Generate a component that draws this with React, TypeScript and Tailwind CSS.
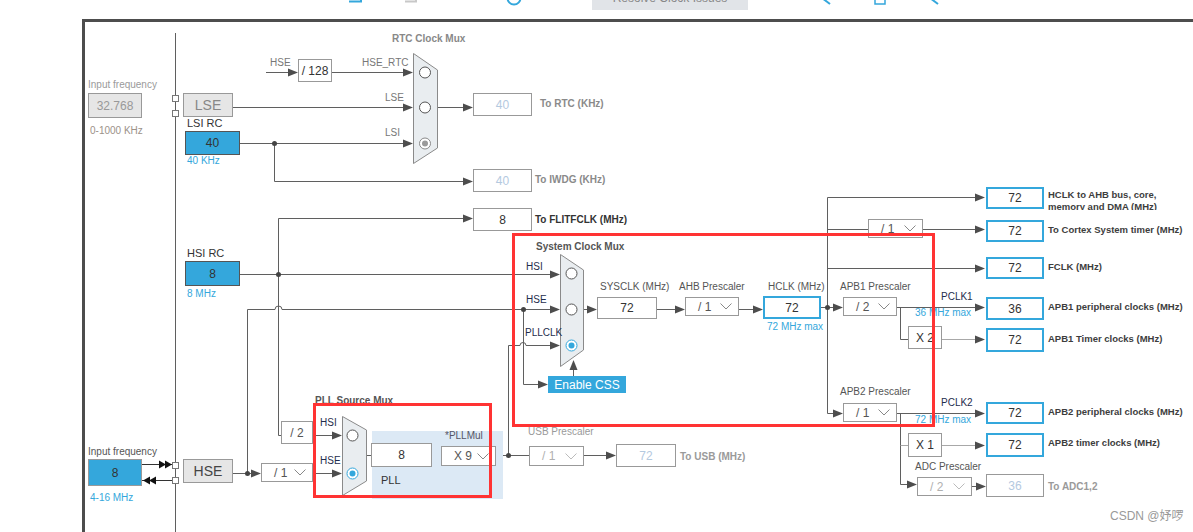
import React from "react";

type Dir = "r" | "l" | "u";
function Arrow({ x, y, d = "r", c = "#4d4d4d" }: { x: number; y: number; d?: Dir; c?: string }) {
  let pts = "";
  if (d === "r") pts = `${x - 10},${y - 4} ${x},${y} ${x - 10},${y + 4}`;
  if (d === "l") pts = `${x + 10},${y - 4} ${x},${y} ${x + 10},${y + 4}`;
  if (d === "u") pts = `${x - 4},${y + 10} ${x},${y} ${x + 4},${y + 10}`;
  return <polygon points={pts} fill={c} />;
}

function Radio({ x, y, on, blue }: { x: number; y: number; on?: boolean; blue?: boolean }) {
  const c = blue ? "#34a7dc" : on ? "#8a8a8a" : "#555";
  return (
    <g>
      <circle cx={x} cy={y} r={5.5} fill="#fff" stroke={c} strokeWidth={1} />
      {(on || blue) && <circle cx={x} cy={y} r={3} fill={blue ? "#34a7dc" : "#9a9a9a"} />}
    </g>
  );
}

function Chevron({ c = "#888" }: { c?: string }) {
  return (
    <svg width="12" height="7" viewBox="0 0 12 7">
      <polyline points="0.5,0.5 6,6 11.5,0.5" fill="none" stroke={c} strokeWidth="1" />
    </svg>
  );
}

function L({ c, children }: { c: string; children: React.ReactNode }) {
  return <div className={"absolute whitespace-nowrap leading-none " + c}>{children}</div>;
}

function B({ c, children }: { c: string; children?: React.ReactNode }) {
  return <div className={"absolute flex items-center justify-center leading-none " + c}>{children}</div>;
}

function DD({ c, t, dis }: { c: string; t: string; dis?: boolean }) {
  return (
    <div
      className={
        "absolute flex items-center justify-between border border-[#999] bg-white pl-[12px] pr-[6px] text-[12px] leading-none " +
        c
      }
    >
      <span className={dis ? "text-[#b0b0b0]" : "text-[#555]"}>{t}</span>
      <Chevron c={dis ? "#bbb" : "#888"} />
    </div>
  );
}

export default function App() {
  return (
    <div className="relative w-[1193px] h-[532px] overflow-hidden bg-white font-['Liberation_Sans',Arial,sans-serif]">
      {/* toolbar remnants */}
      <div className="relative h-[19px]">
        <svg className="absolute left-0 top-0" width="1193" height="19">
          <path d="M349 1.5 H361 V-3" stroke="#34a7dc" strokeWidth="2" fill="none" />
          <path d="M405 1.5 H416 V-3" stroke="#c8c8c8" strokeWidth="2" fill="none" />
          <circle cx="514" cy="-2" r="6.5" stroke="#34a7dc" strokeWidth="2" fill="none" />
          <path d="M822 -2 L830 4" stroke="#34a7dc" strokeWidth="2" fill="none" />
          <path d="M875 -3 V4 H885 V-3" stroke="#34a7dc" strokeWidth="1.5" fill="none" />
          <path d="M930 -2 L938 4" stroke="#34a7dc" strokeWidth="2" fill="none" />
        </svg>
        <div className="absolute left-[592px] top-[-14px] w-[156px] h-[24px] bg-[#e1e4e8] flex items-center justify-center text-[12px] text-[#888]">
          Resolve Clock Issues
        </div>
      </div>
      <div className="ml-[82px] h-[513px] border-l-[3px] border-t-[3px] border-[#4d4d4d]" />

      {/* wires */}
      <svg className="absolute left-0 top-0" width="1193" height="532">
        <g stroke="#5f5f5f" strokeWidth="1" fill="none">
          <path d="M175.5 33 V532" />
          <path d="M266 72.5 H296" />
          <path d="M332 72.5 H411" />
          <path d="M233 107.5 H411" />
          <path d="M240 143.5 H411" />
          <path d="M274.5 143.5 V181.5 H471" />
          <path d="M437 107.5 H471" />
          <path d="M278.5 218.5 H471" />
          <path d="M278.5 218.5 V435.5 H282" />
          <path d="M240 274.5 H558" />
          <path d="M233 473.5 H259" />
          <path d="M247.5 473.5 V309.5 H275 a3.5 3.5 0 0 1 7 0 H558" />
          <path d="M523.5 309.5 V384.5 H546" />
          <path d="M313 435.5 H340" />
          <path d="M313 473.5 H340" />
          <path d="M366 455.5 H372" />
          <path d="M432 455.5 H441" />
          <path d="M496 455.5 H529" />
          <path d="M508.5 455.5 V345.5 H520 a3 3 0 0 1 6 0 H558" />
          <path d="M584 455.5 H614" />
          <path d="M573.5 376 V362" />
          <path d="M583 309.5 H595" />
          <path d="M657 309.5 H683" />
          <path d="M739 309.5 H761" />
          <path d="M821 307.5 H841" />
          <path d="M827.5 197.5 V413.5 H841" />
          <path d="M827.5 197.5 H983" />
          <path d="M827.5 229.5 H868" />
          <path d="M923 229.5 H983" />
          <path d="M827.5 268.5 H983" />
          <path d="M897 307.5 H983" />
          <path d="M900.5 307.5 V339.5 H908" />
          <path d="M897 413.5 H983" />
          <path d="M900.5 413.5 V484.5 H915" />
          <path d="M972 486.5 H984" />
          <path d="M142 464.5 H172" stroke="#333" />
          <path d="M142 480.5 H172" stroke="#333" />
        </g>
        <g stroke="#a8a8a8" strokeWidth="1" fill="none">
          <path d="M942 339.5 H983" />
          <path d="M900.5 445.5 H908" />
          <path d="M942 445.5 H983" />
        </g>
        <Arrow x={298} y={72.5} />
        <Arrow x={413} y={72.5} />
        <Arrow x={413} y={107.5} />
        <Arrow x={413} y={143.5} />
        <Arrow x={473} y={181.5} />
        <Arrow x={473} y={107.5} />
        <Arrow x={473} y={218.5} />
        <Arrow x={560} y={274.5} />
        <Arrow x={261} y={473.5} />
        <Arrow x={560} y={309.5} />
        <Arrow x={548} y={384.5} />
        <Arrow x={342} y={435.5} />
        <Arrow x={342} y={473.5} />
        <Arrow x={560} y={345.5} />
        <Arrow x={616} y={455.5} />
        <Arrow x={573.5} y={360} d="u" />
        <Arrow x={597} y={309.5} />
        <Arrow x={685} y={309.5} />
        <Arrow x={763} y={309.5} />
        <Arrow x={843} y={307.5} />
        <Arrow x={843} y={413.5} />
        <Arrow x={985} y={197.5} />
        <Arrow x={985} y={229.5} />
        <Arrow x={985} y={268.5} />
        <Arrow x={985} y={307.5} />
        <Arrow x={985} y={339.5} />
        <Arrow x={985} y={413.5} />
        <Arrow x={985} y={445.5} />
        <Arrow x={917} y={484.5} />
        <Arrow x={986} y={486.5} />
        <g fill="#444">
          <circle cx="274.5" cy="143.5" r="2.5" />
          <circle cx="278.5" cy="274.5" r="2.5" />
          <circle cx="247.5" cy="473.5" r="2.5" />
          <circle cx="523.5" cy="309.5" r="2.5" />
          <circle cx="508.5" cy="455.5" r="2.5" />
          <circle cx="827.5" cy="307.5" r="2.5" />
        </g>
        {/* input double arrows */}
        <g fill="#111">
          <polygon points="159,460.5 166,464.5 159,468.5" />
          <polygon points="165,460.5 172,464.5 165,468.5" />
          <polygon points="150,476.5 143,480.5 150,484.5" />
          <polygon points="156,476.5 149,480.5 156,484.5" />
        </g>
        <g fill="#fff" stroke="#777">
          <rect x="172.5" y="95.5" width="6" height="6" />
          <rect x="172.5" y="110.5" width="6" height="6" />
          <rect x="172.5" y="462.5" width="6" height="6" />
          <rect x="172.5" y="477.5" width="6" height="6" />
        </g>
        {/* muxes */}
        <g fill="#e9edf0" stroke="#8a8a8a">
          <polygon points="413.5,53.5 437.5,70 437.5,148 413.5,163.5" />
          <polygon points="560.5,254.5 583.5,270 583.5,350 560.5,366.5" />
          <polygon points="342.5,416.5 366.5,430 366.5,481 342.5,495.5" />
        </g>
        <Radio x={425} y={72.5} />
        <Radio x={425} y={107.5} />
        <Radio x={425} y={143.5} on />
        <Radio x={571.5} y={273.5} />
        <Radio x={571.5} y={309.5} />
        <Radio x={571.5} y={345.5} blue />
        <Radio x={352.5} y={435.5} />
        <Radio x={352.5} y={473.5} blue />
      </svg>

      {/* PLL region */}
      <div className="absolute left-[372px] top-[431px] w-[131px] h-[68px] bg-[#dce9f5]" />

      {/* labels */}
      <L c="left-[392px] top-[34px] text-[10px] font-bold text-[#888]">RTC Clock Mux</L>
      <L c="left-[270px] top-[58px] text-[10px] text-[#777]">HSE</L>
      <L c="left-[362px] top-[58px] text-[10px] text-[#777]">HSE_RTC</L>
      <L c="left-[385px] top-[93px] text-[10px] text-[#777]">LSE</L>
      <L c="left-[385px] top-[128px] text-[10px] text-[#777]">LSI</L>
      <L c="left-[88px] top-[80px] text-[10px] text-[#9a9a9a]">Input frequency</L>
      <L c="left-[90px] top-[126px] text-[10px] text-[#9c9289]">0-1000 KHz</L>
      <L c="left-[187px] top-[118px] text-[11px] text-[#333]">LSI RC</L>
      <L c="left-[187px] top-[156px] text-[10px] text-[#34a7dc]">40 KHz</L>
      <L c="left-[540px] top-[99px] text-[10px] font-bold text-[#8a8a8a]">To RTC (KHz)</L>
      <L c="left-[535px] top-[175px] text-[10px] font-bold text-[#8a8a8a]">To IWDG (KHz)</L>
      <L c="left-[535px] top-[215px] text-[10px] font-bold text-[#333]">To FLITFCLK (MHz)</L>
      <L c="left-[187px] top-[248px] text-[11px] text-[#333]">HSI RC</L>
      <L c="left-[187px] top-[289px] text-[10px] text-[#34a7dc]">8 MHz</L>
      <L c="left-[88px] top-[447px] text-[10px] text-[#555]">Input frequency</L>
      <L c="left-[90px] top-[493px] text-[10px] text-[#34a7dc]">4-16 MHz</L>
      <L c="left-[315px] top-[396px] text-[10px] font-bold text-[#555]">PLL Source Mux</L>
      <L c="left-[320px] top-[418px] text-[10px] text-[#1f2d4d]">HSI</L>
      <L c="left-[320px] top-[456px] text-[10px] text-[#1f2d4d]">HSE</L>
      <L c="left-[381px] top-[475px] text-[11px] text-[#333]">PLL</L>
      <L c="left-[445px] top-[431px] text-[10px] text-[#556]">*PLLMul</L>
      <L c="left-[528px] top-[427px] text-[10px] text-[#9a9a9a]">USB Prescaler</L>
      <L c="left-[680px] top-[452px] text-[10px] font-bold text-[#9a9a9a]">To USB (MHz)</L>
      <L c="left-[536px] top-[242px] text-[10px] font-bold text-[#555]">System Clock Mux</L>
      <L c="left-[526px] top-[262px] text-[10px] text-[#1f2d4d]">HSI</L>
      <L c="left-[526px] top-[295px] text-[10px] text-[#1f2d4d]">HSE</L>
      <L c="left-[525px] top-[328px] text-[10px] text-[#1f2d4d]">PLLCLK</L>
      <L c="left-[600px] top-[282px] text-[10px] text-[#555]">SYSCLK (MHz)</L>
      <L c="left-[679px] top-[282px] text-[10px] text-[#555]">AHB Prescaler</L>
      <L c="left-[768px] top-[282px] text-[10px] text-[#555]">HCLK (MHz)</L>
      <L c="left-[767px] top-[322px] text-[10px] text-[#34a7dc]">72 MHz max</L>
      <L c="left-[840px] top-[282px] text-[10px] text-[#555]">APB1 Prescaler</L>
      <L c="left-[941px] top-[292px] text-[10px] text-[#1f2d4d]">PCLK1</L>
      <L c="left-[915px] top-[308px] text-[10px] text-[#34a7dc]">36 MHz max</L>
      <L c="left-[840px] top-[387px] text-[10px] text-[#555]">APB2 Prescaler</L>
      <L c="left-[941px] top-[398px] text-[10px] text-[#1f2d4d]">PCLK2</L>
      <L c="left-[915px] top-[415px] text-[10px] text-[#34a7dc]">72 MHz max</L>
      <L c="left-[915px] top-[462px] text-[10px] text-[#555]">ADC Prescaler</L>
      <L c="left-[1048px] top-[482px] text-[10px] font-bold text-[#9a9a9a]">To ADC1,2</L>
      <div className="absolute left-[1048px] top-[189px] h-[21px] overflow-hidden whitespace-nowrap text-[9.5px] leading-[12px] font-bold text-[#3d3d3d]">
        HCLK to AHB bus, core,
        <br />
        memory and DMA (MHz)
      </div>
      <L c="left-[1048px] top-[225px] text-[9.5px] font-bold text-[#3d3d3d]">To Cortex System timer (MHz)</L>
      <L c="left-[1048px] top-[262px] text-[9.5px] font-bold text-[#3d3d3d]">FCLK (MHz)</L>
      <L c="left-[1048px] top-[302px] text-[9.5px] font-bold text-[#3d3d3d]">APB1 peripheral clocks (MHz)</L>
      <L c="left-[1048px] top-[334px] text-[9.5px] font-bold text-[#3d3d3d]">APB1 Timer clocks (MHz)</L>
      <L c="left-[1048px] top-[407px] text-[9.5px] font-bold text-[#3d3d3d]">APB2 peripheral clocks (MHz)</L>
      <L c="left-[1048px] top-[438px] text-[9.5px] font-bold text-[#3d3d3d]">APB2 timer clocks (MHz)</L>
      <L c="left-[1110px] top-[510px] text-[12px] text-[#999] font-['Liberation_Sans','Noto_Sans_CJK_SC',sans-serif]">CSDN @妤啰</L>

      {/* boxes */}
      <B c="left-[88px] top-[93px] w-[54px] h-[25px] bg-[#e6e6e6] border border-[#999] text-[12px] text-[#999]">32.768</B>
      <B c="left-[183px] top-[93px] w-[50px] h-[24px] bg-[#e6e6e6] border border-[#999] text-[14px] text-[#888]">LSE</B>
      <B c="left-[185px] top-[131px] w-[55px] h-[24px] bg-[#34a7dc] border border-[#555] text-[12px] text-[#333]">40</B>
      <B c="left-[298px] top-[59px] w-[34px] h-[23px] bg-white border border-[#999] text-[12px] text-[#333]">/ 128</B>
      <B c="left-[473px] top-[93px] w-[59px] h-[23px] bg-white border border-[#999] text-[12px] text-[#b4c9df]">40</B>
      <B c="left-[473px] top-[169px] w-[59px] h-[23px] bg-white border border-[#999] text-[12px] text-[#b4c9df]">40</B>
      <B c="left-[473px] top-[208px] w-[59px] h-[23px] bg-white border border-[#999] text-[12px] text-[#333]">8</B>
      <B c="left-[185px] top-[261px] w-[55px] h-[25px] bg-[#34a7dc] border border-[#555] text-[12px] text-[#333]">8</B>
      <B c="left-[88px] top-[459px] w-[54px] h-[27px] bg-[#34a7dc] border border-[#999] text-[12px] text-[#333]">8</B>
      <B c="left-[183px] top-[459px] w-[50px] h-[24px] bg-[#e6e6e6] border border-[#999] text-[14px] text-[#444]">HSE</B>
      <DD c="left-[261px] top-[463px] w-[52px] h-[19px]" t="/ 1" />
      <B c="left-[281px] top-[421px] w-[32px] h-[23px] bg-white border border-[#999] text-[12px] text-[#555]">/ 2</B>
      <B c="left-[371px] top-[443px] w-[61px] h-[24px] bg-white border border-[#999] text-[12px] text-[#333]">8</B>
      <DD c="left-[441px] top-[446px] w-[55px] h-[20px]" t="X 9" />
      <DD c="left-[529px] top-[446px] w-[55px] h-[20px]" t="/ 1" dis />
      <B c="left-[616px] top-[444px] w-[60px] h-[23px] bg-white border border-[#999] text-[12px] text-[#b4c9df]">72</B>
      <B c="left-[548px] top-[376px] w-[78px] h-[17px] bg-[#34a7dc] text-[12px] text-white">Enable CSS</B>
      <B c="left-[597px] top-[297px] w-[60px] h-[22px] bg-white border border-[#999] text-[12px] text-[#333]">72</B>
      <DD c="left-[685px] top-[297px] w-[54px] h-[19px]" t="/ 1" />
      <B c="left-[763px] top-[296px] w-[58px] h-[23px] bg-white border-2 border-[#34a7dc] text-[12px] text-[#333]">72</B>
      <DD c="left-[843px] top-[297px] w-[54px] h-[19px]" t="/ 2" />
      <DD c="left-[868px] top-[219px] w-[55px] h-[19px]" t="/ 1" />
      <B c="left-[908px] top-[326px] w-[34px] h-[23px] bg-white border border-[#999] text-[12px] text-[#333]">X 2</B>
      <DD c="left-[843px] top-[403px] w-[54px] h-[19px]" t="/ 1" />
      <B c="left-[908px] top-[433px] w-[34px] h-[24px] bg-white border border-[#999] text-[12px] text-[#333]">X 1</B>
      <DD c="left-[917px] top-[477px] w-[55px] h-[19px]" t="/ 2" dis />
      <B c="left-[986px] top-[474px] w-[58px] h-[23px] bg-white border border-[#999] text-[12px] text-[#b4c9df]">36</B>
      <B c="left-[986px] top-[187px] w-[58px] h-[22px] bg-white border-2 border-[#34a7dc] text-[12px] text-[#333]">72</B>
      <B c="left-[986px] top-[220px] w-[58px] h-[22px] bg-white border-2 border-[#34a7dc] text-[12px] text-[#333]">72</B>
      <B c="left-[986px] top-[257px] w-[58px] h-[22px] bg-white border-2 border-[#34a7dc] text-[12px] text-[#333]">72</B>
      <B c="left-[986px] top-[297px] w-[58px] h-[23px] bg-white border-2 border-[#34a7dc] text-[12px] text-[#333]">36</B>
      <B c="left-[986px] top-[328px] w-[58px] h-[24px] bg-white border-2 border-[#34a7dc] text-[12px] text-[#333]">72</B>
      <B c="left-[986px] top-[402px] w-[58px] h-[22px] bg-white border-2 border-[#34a7dc] text-[12px] text-[#333]">72</B>
      <B c="left-[986px] top-[433px] w-[58px] h-[24px] bg-white border-2 border-[#34a7dc] text-[12px] text-[#333]">72</B>

      {/* red annotation boxes */}
      <div className="absolute left-[313px] top-[403px] w-[179px] h-[95px] border-[3px] border-[#ff3333]" />
      <div className="absolute left-[512px] top-[233px] w-[423px] h-[194px] border-[3px] border-[#ff3333]" />
    </div>
  );
}
